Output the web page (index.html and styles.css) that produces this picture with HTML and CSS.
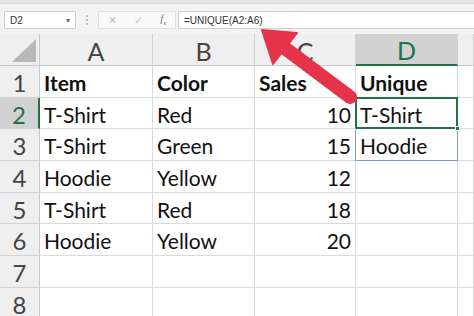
FILE: index.html
```html
<!DOCTYPE html>
<html lang="en">

<head>
  <meta charset="UTF-8">
  <meta name="viewport" content="width=device-width, initial-scale=1.0">
  <title>UNIQUE function</title>

  <link rel="stylesheet" href="styles.css">
</head>

<body>
  <div class="top-strip"></div>

  <div class="formula-bar">
    <div class="name-box"><span>D2</span><span class="caret">&#9662;</span></div>
    <div class="grip"><i></i><i></i><i></i></div>
    <div class="fx-buttons">
      <span class="btn">&#10005;</span>
      <span class="btn">&#10003;</span>
      <span class="btn fx">f<sub>x</sub></span>
    </div>
    <div class="formula-input">=UNIQUE(A2:A6)</div>
  </div>

  <div class="sheet">
    <!-- column headers -->
    <div class="corner"><div class="tri"></div></div>
    <div class="col-head">A</div>
    <div class="col-head">B</div>
    <div class="col-head">C</div>
    <div class="col-head sel">D</div>
    <div class="col-head"></div>

    <div class="row-head">1</div>
    <div class="cell bold">Item</div>
    <div class="cell bold">Color</div>
    <div class="cell bold">Sales</div>
    <div class="cell bold">Unique</div>
    <div class="cell"></div>

    <div class="row-head sel">2</div>
    <div class="cell">T-Shirt</div>
    <div class="cell">Red</div>
    <div class="cell num">10</div>
    <div class="cell active">T-Shirt<span class="handle"></span></div>
    <div class="cell"></div>

    <div class="row-head">3</div>
    <div class="cell">T-Shirt</div>
    <div class="cell">Green</div>
    <div class="cell num">15</div>
    <div class="cell spill">Hoodie</div>
    <div class="cell"></div>

    <div class="row-head">4</div>
    <div class="cell">Hoodie</div>
    <div class="cell">Yellow</div>
    <div class="cell num">12</div>
    <div class="cell"></div>
    <div class="cell"></div>

    <div class="row-head">5</div>
    <div class="cell">T-Shirt</div>
    <div class="cell">Red</div>
    <div class="cell num">18</div>
    <div class="cell"></div>
    <div class="cell"></div>

    <div class="row-head">6</div>
    <div class="cell">Hoodie</div>
    <div class="cell">Yellow</div>
    <div class="cell num">20</div>
    <div class="cell"></div>
    <div class="cell"></div>

    <div class="row-head">7</div>
    <div class="cell"></div>
    <div class="cell"></div>
    <div class="cell"></div>
    <div class="cell"></div>
    <div class="cell"></div>

    <div class="row-head">8</div>
    <div class="cell"></div>
    <div class="cell"></div>
    <div class="cell"></div>
    <div class="cell"></div>
    <div class="cell"></div>
  </div>

  <!-- red pointer arrow over the sheet -->
  <svg class="arrow" width="474" height="316" viewBox="0 0 474 316">
    <line x1="282" y1="46" x2="350" y2="97" stroke="#e5344a" stroke-width="14" stroke-linecap="round" />
    <polygon points="262,30 273,64 297,33" fill="#e5344a" stroke="#e5344a" stroke-width="2" stroke-linejoin="round" />
  </svg>
</body>

</html>
```

FILE: styles.css
```css
* {
  box-sizing: border-box;
}

body {
  margin: 0;
  width: 474px;
  height: 316px;
  overflow: hidden;
  background: #fff;
  font-family: "Lato", "Liberation Sans", sans-serif;
  position: relative;
}

.top-strip {
  height: 4px;
  background: #e3e3e3;
  border-bottom: 1px solid #d6d6d6;
}

/* formula bar */
.formula-bar {
  display: flex;
  align-items: center;
  height: 30px;
  padding: 2px 0 0 4px;
  background: #f3f3f3;
  font-family: "Liberation Sans", sans-serif;
  font-size: 10px;
  color: #333;
}

.name-box {
  display: flex;
  align-items: center;
  justify-content: space-between;
  width: 72px;
  height: 18px;
  padding: 0 5px;
  background: #fff;
  border: 1px solid #d0d0d0;
}

.name-box .caret {
  font-size: 8px;
  color: #666;
}

.grip {
  display: flex;
  flex-direction: column;
  gap: 2px;
  width: 22px;
  align-items: center;
}

.grip i {
  width: 2px;
  height: 2px;
  background: #bdbdbd;
}

.fx-buttons {
  display: flex;
  align-items: center;
  justify-content: space-around;
  width: 78px;
  height: 18px;
  background: #fafafa;
  border: 1px solid #e0e0e0;
  color: #c2c2c2;
  font-size: 11px;
}

.fx-buttons .fx {
  color: #777;
  font-family: "Liberation Serif", serif;
  font-style: italic;
  font-size: 11px;
}

.fx-buttons .fx sub {
  font-size: 7px;
}

.formula-input {
  flex: 1;
  height: 18px;
  margin-left: 2px;
  padding: 3px 5px;
  background: #fff;
  border: 1px solid #d0d0d0;
  border-right: none;
}

/* sheet grid */
.sheet {
  display: grid;
  grid-template-columns: 40px 113px 102px 101px 102px 16px;
  grid-template-rows: 32px repeat(8, 31.7px);
}

.corner {
  display: flex;
  justify-content: flex-end;
  align-items: flex-end;
  padding: 0 3px 3px 0;
  background: #efefef;
  border-right: 1px solid #c8c8c8;
  border-bottom: 1px solid #c8c8c8;
}

.corner .tri {
  width: 0;
  height: 0;
  border-left: 24px solid transparent;
  border-bottom: 23px solid #b8b8b8;
}

.col-head {
  display: flex;
  justify-content: center;
  align-items: center;
  padding-top: 2px;
  background: #efefef;
  border-right: 1px solid #d2d2d2;
  border-bottom: 1px solid #c8c8c8;
  font-size: 25px;
  color: #444;
}

.col-head.sel {
  background: #d2d2d2;
  color: #217346;
  border-bottom: 2px solid #217346;
}

.row-head {
  display: flex;
  justify-content: center;
  align-items: center;
  padding-top: 2px;
  background: #efefef;
  border-right: 1px solid #c8c8c8;
  border-bottom: 1px solid #d2d2d2;
  font-size: 24px;
  color: #444;
}

.row-head.sel {
  background: #d2d2d2;
  color: #217346;
  border-right: 2px solid #217346;
}

.cell {
  position: relative;
  display: flex;
  align-items: center;
  padding: 2px 4px 0;
  border-right: 1px solid #dadada;
  border-bottom: 1px solid #dadada;
  font-size: 21px;
  color: #111;
  white-space: nowrap;
}

.cell.bold {
  font-weight: bold;
}

.cell.num {
  justify-content: flex-end;
}

.cell.active::after {
  content: "";
  position: absolute;
  top: -1px;
  left: -1px;
  right: -1px;
  bottom: -1px;
  border: 2px solid #217346;
}

.cell.active .handle {
  position: absolute;
  right: -3px;
  bottom: -3px;
  width: 5px;
  height: 5px;
  background: #217346;
  border: 1px solid #fff;
  z-index: 2;
}

.cell.spill::after {
  content: "";
  position: absolute;
  top: -1px;
  left: -1px;
  right: -1px;
  bottom: -1px;
  border: 1px solid #7b9ed8;
  border-top: none;
}

.arrow {
  position: absolute;
  top: 0;
  left: 0;
  pointer-events: none;
}
```
